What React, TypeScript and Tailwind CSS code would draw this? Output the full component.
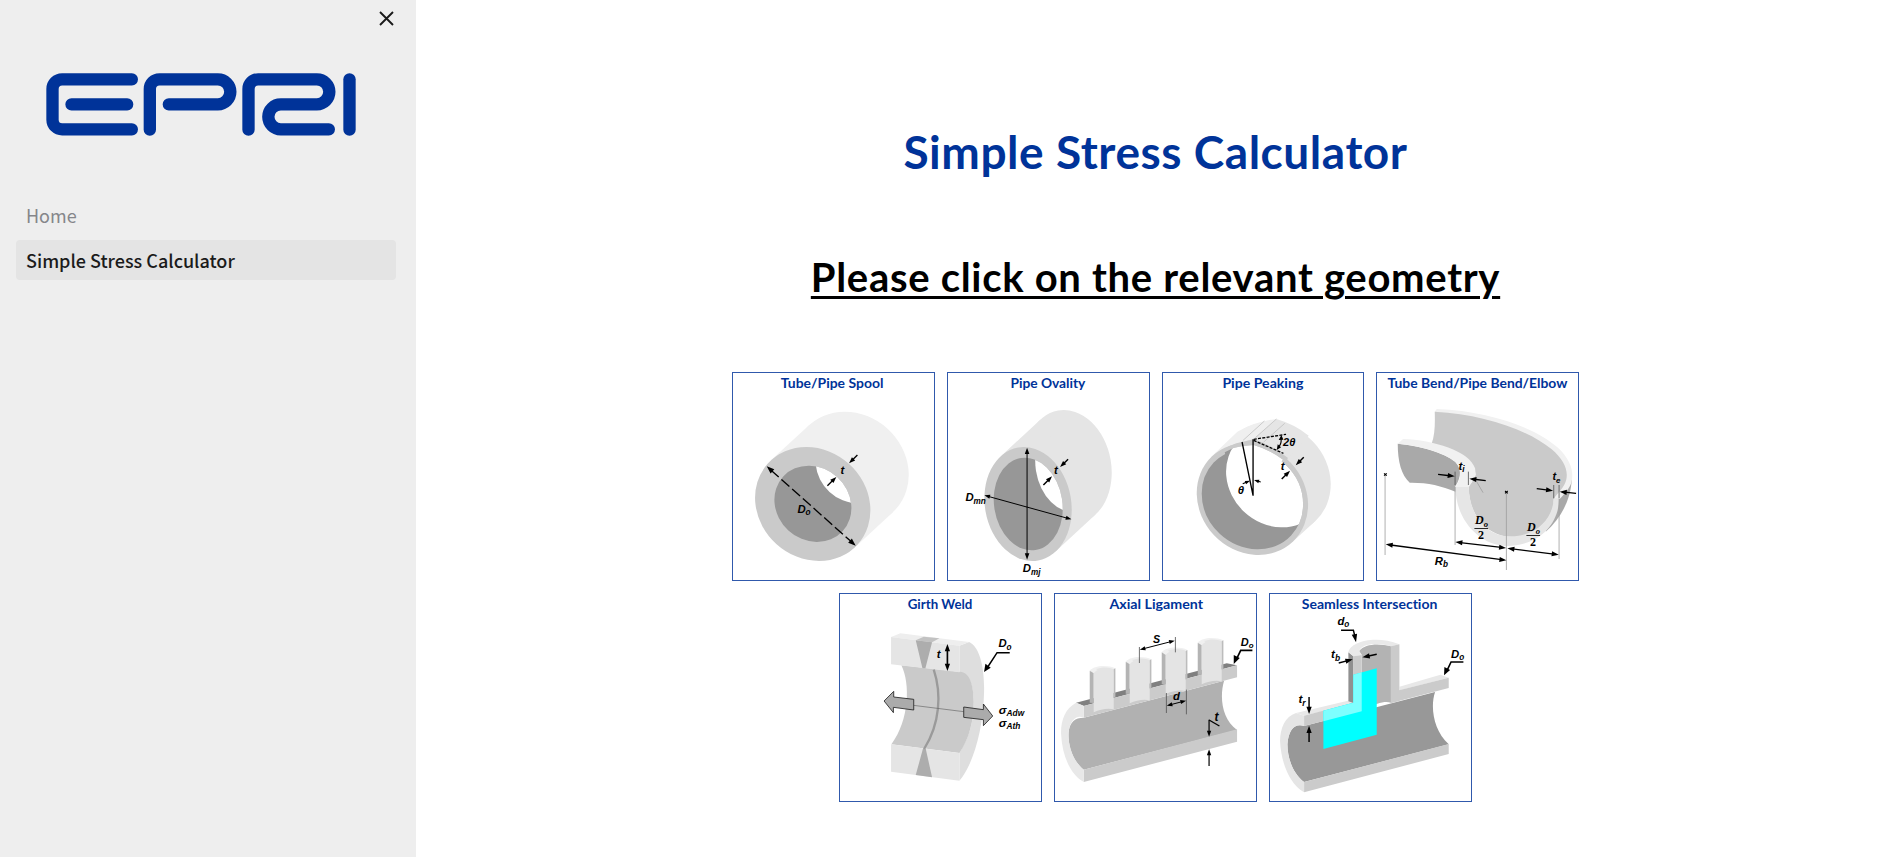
import React from "react";

type Pt = [number, number];
type Oval = { cx: number; cy: number; rx: number; ry: number; c: number };

const BLUE = "#003399";

/** Ellipse given by its half extents and the skew between them. */
function Ell({ o, fill }: { o: Oval; fill?: string }) {
  const A = o.rx * o.rx;
  const B = o.ry * o.ry;
  const m = (A + B) / 2;
  const d = Math.hypot((A - B) / 2, o.c);
  const t = (0.5 * Math.atan2(2 * o.c, A - B) * 180) / Math.PI;
  return (
    <ellipse
      rx={Math.sqrt(m + d)}
      ry={Math.sqrt(m - d)}
      transform={`translate(${o.cx} ${o.cy}) rotate(${t})`}
      fill={fill}
    />
  );
}

/** Solid swept from an oval along (dx, dy). */
function Sweep({ o, dx, dy, fill }: { o: Oval; dx: number; dy: number; fill: string }) {
  const nx = -dy;
  const ny = dx;
  const vx = o.rx * o.rx * nx + o.c * ny;
  const vy = o.c * nx + o.ry * o.ry * ny;
  const k = Math.sqrt(nx * vx + ny * vy);
  const px = vx / k;
  const py = vy / k;
  const pts: Pt[] = [
    [o.cx + px, o.cy + py],
    [o.cx + px + dx, o.cy + py + dy],
    [o.cx - px + dx, o.cy - py + dy],
    [o.cx - px, o.cy - py],
  ];
  return (
    <g>
      <Ell o={{ ...o, cx: o.cx + dx, cy: o.cy + dy }} fill={fill} />
      <polygon points={pts.map((p) => p.join(",")).join(" ")} fill={fill} />
    </g>
  );
}

function Arrow({ a, b, both, w = 3, h = 15, dash }: { a: Pt; b: Pt; both?: boolean; w?: number; h?: number; dash?: string }) {
  const len = Math.hypot(b[0] - a[0], b[1] - a[1]);
  const ux = (b[0] - a[0]) / len;
  const uy = (b[1] - a[1]) / len;
  const head = (p: Pt, s: number) => {
    const bx = p[0] - ux * h * s;
    const by = p[1] - uy * h * s;
    const q = h * 0.36;
    return `${p[0]},${p[1]} ${bx - uy * q},${by + ux * q} ${bx + uy * q},${by - ux * q}`;
  };
  const r = h * 0.7;
  return (
    <g>
      <line
        x1={both ? a[0] + ux * r : a[0]}
        y1={both ? a[1] + uy * r : a[1]}
        x2={b[0] - ux * r}
        y2={b[1] - uy * r}
        stroke="#000"
        strokeWidth={w}
        strokeDasharray={dash}
      />
      <polygon points={head(b, 1)} />
      {both && <polygon points={head(a, -1)} />}
    </g>
  );
}

function Label({ x, y, s = 34, sub, serif, children }: { x: number; y: number; s?: number; sub?: string; serif?: boolean; children: React.ReactNode }) {
  return (
    <text
      x={x}
      y={y}
      fontSize={s}
      className={
        serif
          ? "font-['Liberation_Serif',serif] font-bold italic"
          : "font-['Liberation_Sans',sans-serif] font-bold italic"
      }
    >
      {children}
      {sub && (
        <tspan dy={s * 0.22} fontSize={s * 0.72}>
          {sub}
        </tspan>
      )}
    </text>
  );
}

function Half({ x, y }: { x: number; y: number }) {
  return (
    <g>
      <Label x={x} y={y} s={36} sub="o" serif>D</Label>
      <rect x={x - 2} y={y + 11} width={41} height={2.5} />
      <text x={x + 9} y={y + 44} fontSize={36} className="font-['Liberation_Serif',serif] font-bold">2</text>
    </g>
  );
}

function Spool() {
  const o = { cx: 264, cy: 417, rx: 173, ry: 171, c: 3250 };
  const i = { cx: 264.5, cy: 416.5, rx: 115.5, ry: 114.5, c: 1450 };
  return (
    <g>
      <clipPath id="spool"><Ell o={i} /></clipPath>
      <Sweep o={o} dx={115} dy={-106} fill="#f0f0f0" />
      <Ell o={o} fill="#cacaca" />
      <Ell o={i} fill="#979797" />
      <g clipPath="url(#spool)"><Ell o={{ ...i, cx: 388, cy: 301 }} fill="#fff" /></g>
      <Arrow a={[126, 304]} b={[393, 542]} both dash="32 11" w={4} h={23} />
      <Arrow a={[398, 270]} b={[373, 295]} w={4} h={19} />
      <Arrow a={[308, 362]} b={[335, 336]} w={4} h={19} />
      <Label x={347} y={327}>t</Label>
      <Label x={218} y={444} sub="o">D</Label>
    </g>
  );
}

function Ovality() {
  const o = { cx: 265, cy: 417, rx: 131, ry: 171, c: 2200 };
  const i = { cx: 265.5, cy: 417, rx: 103.5, ry: 139, c: 1400 };
  return (
    <g>
      <clipPath id="ovality"><Ell o={i} /></clipPath>
      <Sweep o={o} dx={120} dy={-111} fill="#e5e5e5" />
      <Ell o={o} fill="#cacaca" />
      <Ell o={i} fill="#979797" />
      <g clipPath="url(#ovality)"><Ell o={{ ...i, cx: 390, cy: 302 }} fill="#fff" /></g>
      <Arrow a={[262, 248]} b={[262, 584]} both h={19} />
      <Arrow a={[134, 391]} b={[395, 463]} both h={17} />
      <Arrow a={[385, 283]} b={[361, 306]} w={4.4} h={19} />
      <Arrow a={[311, 360]} b={[337, 334]} w={4.4} h={19} />
      <Label x={343} y={328}>t</Label>
      <Label x={77} y={409} sub="mn">D</Label>
      <Label x={249} y={622} sub="mj">D</Label>
    </g>
  );
}

function Peaking() {
  const o = { cx: 293, cy: 402, rx: 167, ry: 168, c: 3000 };
  const i = { cx: 293, cy: 402, rx: 152, ry: 151, c: 2450 };
  return (
    <g>
      <clipPath id="peaking">
        <Ell o={i} />
        <path d="M210 262 L236 249 Q262 242 297 240 Q345 254 385 284 L340 330 L230 330 Z" />
      </clipPath>
      <Sweep o={o} dx={68} dy={-62} fill="#e5e5e5" />
      <path d="M297 222 L365 162 Q420 178 462 212 L400 280 Z" fill="#e5e5e5" />
      <path d="M175 270 L248 200 Q300 170 365 162 L297 222 Q215 240 175 270 Z" fill="#efefef" />
      <Ell o={o} fill="#cacaca" />
      <path d="M190 266 Q228 236 262 231 L297 223 Q350 240 400 279 L380 300 L220 280 Z" fill="#cacaca" />
      <g clipPath="url(#peaking)">
        <rect x={120} y={220} width={340} height={350} fill="#979797" />
        <Ell o={{ ...i, cx: 366, cy: 336 }} fill="#fff" />
      </g>
      <path d="M265 226 L329 168 M302 218 L365 162 M327 231 L390 175" stroke="#c2c2c2" strokeWidth={2.5} fill="none" />
      <path d="M262 231 L295 392 V223" stroke="#000" strokeWidth={4} fill="none" />
      <path d="M297 223 L394 208 M297 226 L386 265" stroke="#000" strokeWidth={4} strokeDasharray="9 4" fill="none" />
      <path d="M379 222 Q381 235 372 246" stroke="#000" strokeWidth={3.5} fill="none" />
      <path d="M380 210 L372 225 L386 224 Z M366 255 L369 238 L379 247 Z" />
      <Arrow a={[264, 356]} b={[286, 347]} w={3.5} h={15} />
      <Arrow a={[318, 351]} b={[298, 345]} w={3.5} h={15} />
      <Arrow a={[447, 277]} b={[423, 301]} w={4.4} h={20} />
      <Arrow a={[381, 342]} b={[406, 317]} w={4.4} h={20} />
      <Label x={378} y={314}>t</Label>
      <Label x={249} y={387}>θ</Label>
      <Label x={385} y={243} s={33}>2θ</Label>
    </g>
  );
}

function Bend() {
  return (
    <g>
      <path d="M606 343 C604 395 580 455 528 500 L556 400 Z" fill="#a9a9a9" />
      <path d="M195 140 L201 132 C360 138 500 190 563 247 C605 285 614 325 604 356 C594 378 582 388 570 402 L550 402 L480 300 Z" fill="#f1f1f1" />
      <path d="M195 140 C340 147 475 195 545 252 C588 288 599 325 586 355 C576 376 560 388 552 402 C553 460 500 516 425 516 C350 512 297 450 297 366 L318 330 C318 290 235 242 185 238 C196 210 196 175 195 140 Z" fill="#cacaca" />
      <path d="M257 366 H297 C299 450 350 513 418 514 C500 516 550 460 552 400 H568 C568 480 505 543 410 543 C325 540 257 460 257 366 Z" fill="#e6e6e6" />
      <path d="M84 236 C150 242 225 264 256 290 C275 308 276 335 257 364 V380 C215 362 170 352 120 353 C95 330 84 290 84 236 Z" fill="#a9a9a9" />
      <path d="M84 236 L100 222 C190 225 300 258 316 310 C321 335 307 352 297 366 H257 C274 343 278 315 258 292 C225 262 150 242 84 236 Z" fill="#f1f1f1" />
      <path d="M46 330 V570 M410 385 V615 M256 366 V540 M568 402 V582 M318 345 L340 383" stroke="#a0a0a0" strokeWidth={2.5} fill="none" />
      <path d="M256 320 V360 M296 320 V360 M552 360 V400 M568 360 V400" stroke="#555" strokeWidth={2.5} />
      <path d="M43 325 l8 7 m0 -7 l-8 7 M406 378 l8 7 m0 -7 l-8 7" stroke="#000" strokeWidth={3.5} />
      <Arrow a={[205, 328]} b={[255, 334]} w={4} h={21} />
      <Arrow a={[348, 347]} b={[299, 341]} w={4} h={21} />
      <Arrow a={[501, 371]} b={[550, 377]} w={4} h={21} />
      <Arrow a={[619, 385]} b={[570, 380]} w={4} h={21} />
      <Arrow a={[48, 538]} b={[410, 586]} both w={4} h={21} />
      <Arrow a={[257, 531]} b={[409, 549]} both w={4} h={21} />
      <Arrow a={[413, 550]} b={[567, 569]} both w={4} h={21} />
      <Label x={266} y={314} s={35} sub="i">t</Label>
      <Label x={548} y={346} s={33} sub="e">t</Label>
      <Half x={316} y={478} />
      <Half x={472} y={499} />
      <Label x={195} y={599} s={34} sub="b">R</Label>
    </g>
  );
}

function Girth() {
  return (
    <g>
      <path d="M385 176 L414 165 C445 178 461 240 459 315 C457 430 425 535 385 581 V498 C415 450 429 400 428 345 C427 300 418 262 385 254 Z" fill="#dedede" />
      <path d="M211 235 L385 254 C415 252 428 295 428 345 C428 400 415 455 385 498 L181 472 C235 400 238 290 211 235 Z" fill="#cacaca" />
      <path d="M180 150 L208 139 L414 165 L385 176 Z" fill="#eeeeee" />
      <path d="M180 150 L385 176 V256 L180 232 Z M180 472 L385 498 V581 L180 554 Z" fill="#e5e5e5" />
      <path d="M254 160 L278 149 L325 154 L303 166 Z" fill="#c2c2c2" />
      <path d="M254 160 L303 166 L283 244 L274 243 Z M276 484 L284 485 L303 571 L254 564 Z" fill="#adadad" />
      <path d="M308 248 C332 320 327 410 279 486" stroke="#9a9a9a" strokeWidth={7} fill="none" />
      <path d="M247 355 L398 374" stroke="#666" strokeWidth={2} />
      <path d="M159 342 L188 313 V330 L248 337 V369 L187 361 V377 Z M398 360 L457 368 V351 L485 387 L457 416 V398 L398 391 Z" fill="#ababab" stroke="#222" strokeWidth={2.5} />
      <Arrow a={[349, 171]} b={[349, 252]} both w={5} h={22} />
      <path d="M536 197 H498 L470 240" stroke="#000" strokeWidth={4.5} fill="none" />
      <path d="M459 255 L463 230 L479 242 Z" />
      <Label x={317} y={214}>t</Label>
      <Label x={502} y={181} sub="o">D</Label>
      <Label x={503} y={380} s={35} sub="Adw">σ</Label>
      <Label x={503} y={419} s={35} sub="Ath">σ</Label>
    </g>
  );
}

function Nozzle({ x, y }: { x: number; y: number }) {
  return (
    <g transform={`translate(${x} ${y})`}>
      <path d="M0 9 C12 -8 55 -9 77 2 L72 12 L12 20 Z" fill="#f0f0f0" />
      <path d="M0 9 L12 17 V106 L0 105 Z" fill="#b4b4b4" />
      <path d="M12 17 C16 12 20 8 24 7 L18 4 C38 -3 60 -2 72 5 V125 C55 121 32 124 12 134 Z" fill="#e4e4e4" />
      <path d="M72 5 L77 2 V87 L72 92 Z" fill="#bcbcbc" />
    </g>
  );
}

function Ligament() {
  return (
    <g>
      <path d="M111 392 L532 281 C518 330 525 395 571 429 L111 548 C75 520 62 470 66 432 C70 405 85 392 111 392 Z" fill="#b1b1b1" />
      <path d="M88 347 L540 229 L571 235 L111 357 Z" fill="#808080" />
      <path d="M111 357 L571 235 V271 L111 392 Z M111 548 L571 427 V464 L111 585 Z" fill="#cbcbcb" />
      <path d="M88 347 C55 365 42 400 43 440 C46 505 70 562 111 585 V548 C75 520 62 465 66 432 C72 400 88 383 111 392 V356 Z" fill="#e8e8e8" />
      <Nozzle x={129} y={242} />
      <Nozzle x={237} y={215} />
      <Nozzle x={345} y={187} />
      <Nozzle x={453} y={158} />
      <path d="M278 180 V228 M386 150 V196 M359 318 V378 M419 308 V382" stroke="#555" strokeWidth={2.5} />
      <Arrow a={[279, 188]} b={[384, 161]} both h={17} />
      <Arrow a={[360, 356]} b={[418, 341]} both h={17} />
      <path d="M617 190 H582 L570 215" stroke="#000" strokeWidth={5} fill="none" />
      <path d="M561 231 L561 204 L579 213 Z" />
      <path d="M518 417 L487 399" stroke="#000" strokeWidth={4} />
      <Arrow a={[487, 398]} b={[487, 449]} w={3.6} h={18} />
      <Arrow a={[487, 537]} b={[487, 487]} w={3.6} h={18} />
      <Label x={319} y={167} s={32}>S</Label>
      <Label x={379} y={340} s={34}>d</Label>
      <Label x={503} y={402} s={36}>t</Label>
      <Label x={582} y={177} s={33} sub="o">D</Label>
    </g>
  );
}

function Intersection() {
  return (
    <g>
      <path d="M127 417 L520 315 C505 360 515 430 561 472 L127 585 C95 562 77 515 77 472 C80 430 98 408 127 417 Z" fill="#989898" />
      <path d="M103 378 L268 339 L275 350 L127 386 Z M413 299 L536 263 L561 272 L414 310 Z" fill="#e8e8e8" />
      <path d="M127 386 L275 347 L300 340 V373 L127 417 Z M388 316 L561 272 V303 L388 348 Z M127 585 L561 471 V501 L127 616 Z" fill="#cbcbcb" />
      <path d="M127 386 L103 378 C70 388 55 425 55 462 C58 530 85 592 127 616 V585 C95 562 77 515 77 472 C80 430 98 408 127 417 Z" fill="#e5e5e5" />
      <path d="M292 192 C310 170 350 168 388 178 V347 C370 342 350 345 300 373 V204 Z" fill="#b3b3b3" />
      <path d="M260 196 L275 208 V348 L260 343 Z" fill="#909090" />
      <path d="M260 196 C264 165 340 142 413 172 L387 178 C340 164 300 172 292 192 L300 204 L275 208 Z" fill="#e9e9e9" />
      <path d="M275 208 L300 204 V373 L275 379 Z M387 178 L413 172 V341 L387 348 Z" fill="#cbcbcb" />
      <path d="M275 263 L345 244 V443 L185 486 V371 L275 347 Z" fill="#00ffff" />
      <path d="M275 263 L300 256 V373 L185 403 V371 L275 347 Z" fill="#7dffff" />
      <path d="M238 130 H275 L279 146" stroke="#000" strokeWidth={4.4} fill="none" />
      <path d="M283 166 L270 143 L286 140 Z" />
      <path d="M605 225 H568 L556 250" stroke="#000" strokeWidth={4.8} fill="none" />
      <path d="M547 265 L548 240 L565 249 Z" />
      <Arrow a={[231, 228]} b={[273, 217]} w={4.4} h={22} />
      <Arrow a={[345, 202]} b={[302, 211]} w={4.4} h={22} />
      <Arrow a={[142, 330]} b={[142, 381]} w={4.4} h={22} />
      <Arrow a={[142, 465]} b={[142, 416]} w={4.4} h={22} />
      <Label x={227} y={114} s={34} sub="o">d</Label>
      <Label x={208} y={214} s={35} sub="b">t</Label>
      <Label x={110} y={348} s={35} sub="r">t</Label>
      <Label x={568} y={213} sub="o">D</Label>
    </g>
  );
}

type Tile = { name: string; x0: number; tx: number; tw: number; Draw: () => React.ReactElement };

const ROWS: { y0: number; tiles: Tile[] }[] = [
  {
    y0: 21,
    tiles: [
      { name: "Tube/Pipe Spool", x0: 22, tx: 168, tw: 308, Draw: Spool },
      { name: "Pipe Ovality", x0: 22, tx: 212, tw: 225, Draw: Ovality },
      { name: "Pipe Peaking", x0: 22, tx: 203, tw: 243, Draw: Peaking },
      { name: "Tube Bend/Pipe Bend/Elbow", x0: 19, tx: 53, tw: 540, Draw: Bend },
    ],
  },
  {
    y0: 18,
    tiles: [
      { name: "Girth Weld", x0: 24, tx: 230, tw: 194, Draw: Girth },
      { name: "Axial Ligament", x0: 22, tx: 188, tw: 281, Draw: Ligament },
      { name: "Seamless Intersection", x0: 22, tx: 120, tw: 407, Draw: Intersection },
    ],
  },
];

function GeometryTile({ tile, y0 }: { tile: Tile; y0: number }) {
  const { Draw } = tile;
  return (
    <a className="block h-[209px] w-[202.8px] cursor-pointer border border-[#3059ac] bg-white">
      <svg viewBox={`${tile.x0 + 3} ${y0 + 3} 602 621`} className="block h-full w-full">
        <text
          x={tile.tx}
          y={y0 + 49}
          fontSize={38}
          textLength={tile.tw}
          lengthAdjust="spacingAndGlyphs"
          fill={BLUE}
          className="font-['Lato',sans-serif] font-bold [font-variant-ligatures:none]"
        >
          {tile.name}
        </text>
        <Draw />
      </svg>
    </a>
  );
}

function Logo() {
  return (
    <svg viewBox="140 219 929 189" className="h-[63px] w-[310px]" fill="none" stroke={BLUE} strokeWidth={37} strokeLinecap="round">
      <path d="M397 238 H188 a29 29 0 0 0 -29 29 V359 a29 29 0 0 0 29 29 H397 M216 313 H383" />
      <path d="M451 389 V267 a29 29 0 0 1 29 -29 H655 a37.5 37.5 0 0 1 0 75 H508" />
      <path d="M747 389 V267 a29 29 0 0 1 29 -29 H952 a37.5 37.5 0 0 1 0 75 H844 a37.5 37.5 0 0 0 0 75 H988" />
      <path d="M1050 238 V389" />
    </svg>
  );
}

export default function App() {
  return (
    <div className="flex h-[857px] w-full overflow-hidden bg-white">
      <aside className="flex w-[416px] shrink-0 flex-col bg-[#eeeeee] font-['Noto_Sans_CJK_JP',sans-serif]">
        <div className="flex h-[73px] justify-end pt-[11px] pr-[22px]">
          <svg viewBox="0 0 15 15" className="h-[15px] w-[15px]" stroke="#1a1a1a" strokeWidth={1.9}>
            <path d="M1 1 L14 14 M14 1 L1 14" />
          </svg>
        </div>
        <div className="pl-[46px]">
          <Logo />
        </div>
        <nav className="mt-[59px] flex flex-col gap-[5px] pr-5 pl-4">
          <a className="flex h-10 items-center rounded px-[10px] text-[18px] text-[#85868a]">Home</a>
          <a className="flex h-10 items-center rounded bg-[#e4e4e4] px-[10px] text-[18px] font-medium text-[#1b1b1b]">
            <span>Simple Stress Calculator</span>
          </a>
        </nav>
      </aside>
      <main className="flex flex-1 flex-col items-center pl-[12px]">
        <h1 className="mt-[122px] h-[60px] font-['Lato',sans-serif] text-[46px] leading-[60px] font-bold tracking-[0.55px] whitespace-nowrap text-[#003399]">
          Simple Stress Calculator
        </h1>
        <h2 className="mt-[71px] h-[48px] font-['Lato',sans-serif] text-[40px] leading-[48px] font-bold tracking-[0.7px] whitespace-nowrap text-black underline decoration-[3px] underline-offset-[4px]">
          Please click on the relevant geometry
        </h2>
        <div className="mt-[71px] flex flex-col items-center gap-3">
          {ROWS.map((row) => (
            <div key={row.y0} className="flex gap-3">
              {row.tiles.map((t) => (
                <GeometryTile key={t.name} tile={t} y0={row.y0} />
              ))}
            </div>
          ))}
        </div>
      </main>
    </div>
  );
}
